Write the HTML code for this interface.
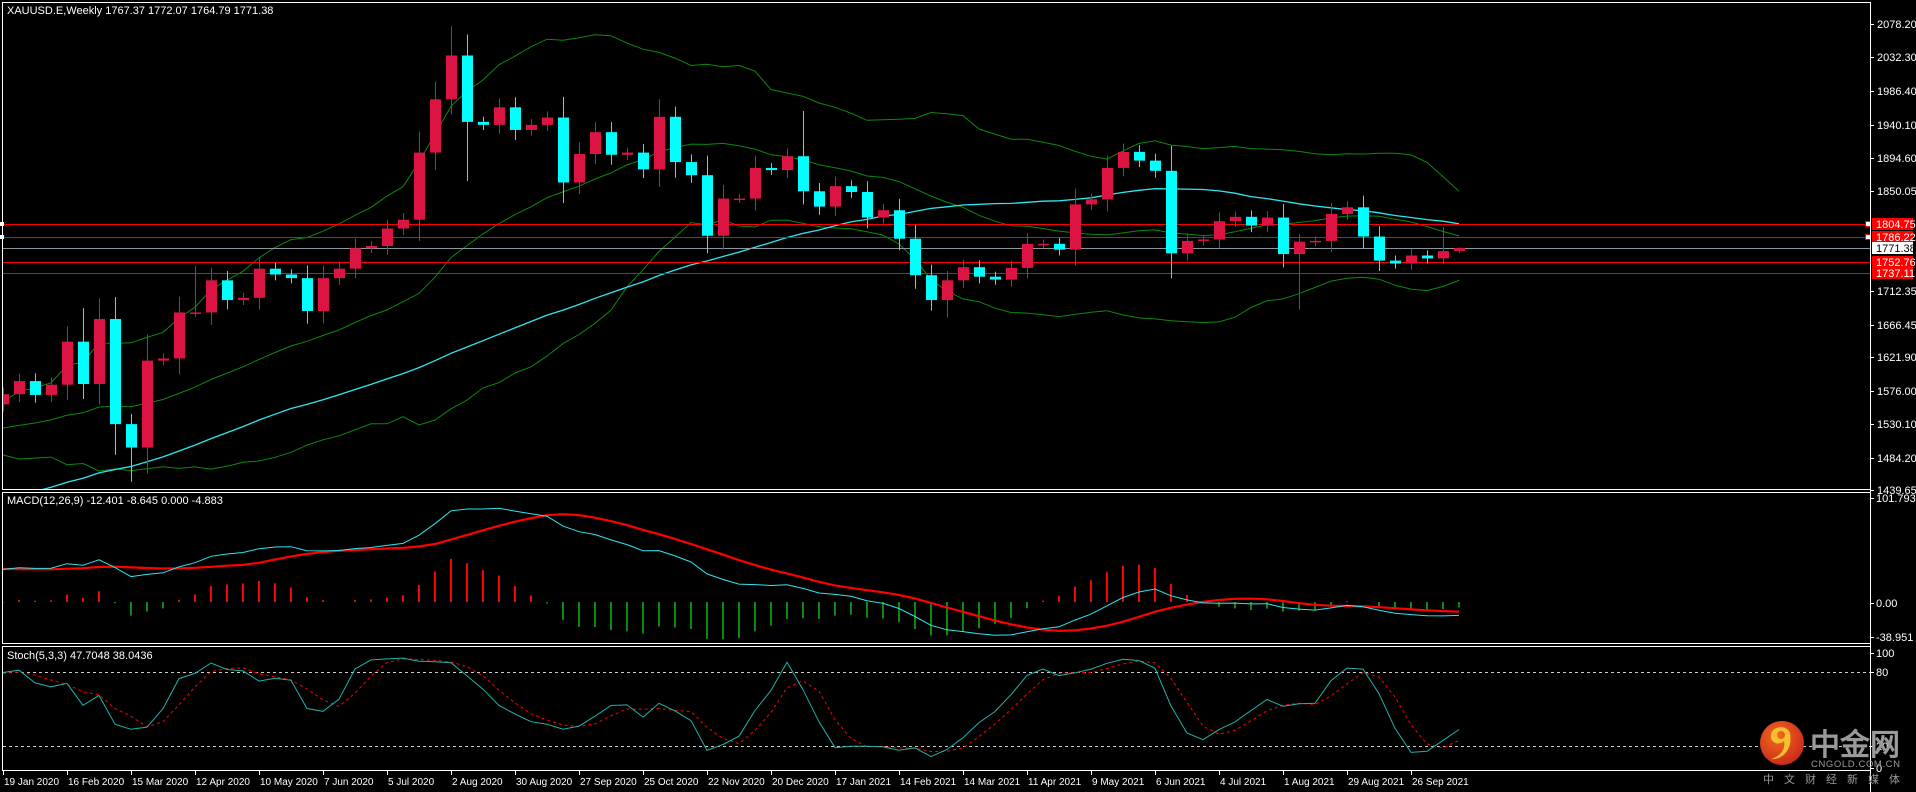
<!DOCTYPE html>
<html><head><meta charset="utf-8">
<style>
html,body{margin:0;padding:0;background:#000;width:1916px;height:792px;overflow:hidden}
svg{display:block}
text{font-family:"Liberation Sans",sans-serif;}
</style></head>
<body>
<div id="c"></div>
<script>
var C=[1571,1589,1570,1584,1643,1585,1674,1530,1498,1617,1620,1683,1683,1727,1700,1703,1743,1735,1730,1685,1730,1743,1771,1774,1798,1810,1902,1975,2035,1944,1940,1964,1933,1940,1950,1861,1900,1930,1899,1902,1879,1951,1889,1871,1788,1839,1839,1881,1878,1897,1849,1828,1856,1848,1813,1823,1784,1734,1700,1727,1745,1732,1728,1744,1777,1777,1769,1831,1838,1881,1903,1891,1877,1764,1781,1783,1808,1814,1802,1813,1763,1780,1781,1818,1827,1787,1754,1750,1761,1757,1767,1771.38];
var PRE=[1283,1298,1318,1313,1314,1322,1327,1313,1294,1302,1303,1312,1298,1295,1291,1285,1276,1280,1286,1284,1298,1285,1341,1341,1399,1409,1400,1418,1426,1419,1445,1497,1498,1527,1515,1510,1515,1505,1500,1512,1520,1515,1508,1512,1518,1522,1515,1510,1520,1525,1530,1540,1545,1552,1557];
var HO={5:1689,7:1704,12:1747,28:2075,42:1965,50:1959,90:1800,91:1772.07};
var LO={8:1451,29:1863,44:1764,59:1676,81:1687,91:1764.79};
var all=PRE.concat(C),P=PRE.length,N=C.length;
var O=[],H=[],L=[];
for(var i=0;i<N;i++){var o=i==0?1557:C[i-1];if(i==91)o=1767.37;O.push(o);var d=Math.abs(C[i]-o);
H.push(HO[i]||Math.max(o,C[i])+6+d*0.25);L.push(LO[i]||Math.min(o,C[i])-6-d*0.25);}
var AH=[],AL=[];for(var j=0;j<all.length;j++){if(j<P){AH.push(all[j]+10);AL.push(all[j]-10);}else{AH.push(H[j-P]);AL.push(L[j-P]);}}
function X(i){return 3+16*i}
function Y(p){return 190.5+(1850.05-p)*0.73}
function sma(a,n,k){var s=0;for(var t=k-n+1;t<=k;t++)s+=a[t];return s/n}
var s='<svg width="1916" height="792" xmlns="http://www.w3.org/2000/svg">';
s+='<defs><clipPath id="m"><rect x="3" y="3" width="1867" height="486"/></clipPath><clipPath id="mc"><rect x="3" y="493" width="1867" height="150"/></clipPath><clipPath id="st"><rect x="3" y="647" width="1867" height="123"/></clipPath><radialGradient id="g" cx="40%" cy="35%" r="70%"><stop offset="0" stop-color="#f26b1d"/><stop offset="1" stop-color="#c8281a"/></radialGradient></defs>';
s+='<g fill="none" stroke="#fff" stroke-width="1"><rect x="2.5" y="2.5" width="1868" height="487"/><rect x="2.5" y="492.5" width="1868" height="151"/><rect x="2.5" y="646.5" width="1868" height="124"/></g>';
var up='',mid='',lo='',ma='';
for(var i=0;i<N;i++){var k=P+i;var m=sma(all,20,k);var v=0;for(var t=k-19;t<=k;t++)v+=(all[t]-m)*(all[t]-m);var sd=Math.sqrt(v/20);
up+=X(i)+','+Y(m+2*sd).toFixed(1)+' ';mid+=X(i)+','+Y(m).toFixed(1)+' ';lo+=X(i)+','+Y(m-2*sd).toFixed(1)+' ';ma+=X(i)+','+Y(sma(all,50,k)).toFixed(1)+' ';}
s+='<g clip-path="url(#m)" fill="none"><polyline points="'+up+'" stroke="#0b8a0b"/><polyline points="'+mid+'" stroke="#0b8a0b"/><polyline points="'+lo+'" stroke="#0b8a0b"/><polyline points="'+ma+'" stroke="#2ee6f0" stroke-width="1.3"/>';
[[1804.75,'#f00'],[1786.22,'#f00'],[1771.38,'#8a96a0'],[1752.76,'#f00'],[1737.11,'#f00']].forEach(function(a){var y=Math.round(Y(a[0]))+0.5;s+='<line x1="0" x2="1870" y1="'+y+'" y2="'+y+'" stroke="'+a[1]+'"/>';});
for(var i=0;i<N;i++){var x=X(i),u=C[i]>=O[i],col=u?'#dc1443':'#00ffff';
s+='<line x1="'+(x+0.5)+'" x2="'+(x+0.5)+'" y1="'+Y(H[i])+'" y2="'+Y(L[i])+'" stroke="'+col+'"/>';
var t=Y(Math.max(C[i],O[i])),b=Y(Math.min(C[i],O[i]));if(b-t<1.5)b=t+1.5;
s+='<rect x="'+(x-5)+'" y="'+t+'" width="11" height="'+(b-t)+'" fill="'+col+'"/>';}
s+='</g>';
[1804.75,1786.22].forEach(function(p){var y=Math.round(Y(p));s+='<rect x="1865.5" y="'+(y-2.5)+'" width="5" height="5" fill="#fff" stroke="#f00"/><rect x="0" y="'+(y-2)+'" width="4" height="4" fill="#fff"/>';});
s+='<line x1="1870.5" x2="1870.5" y1="2" y2="792" stroke="#fff"/>';
[2078.20,2032.30,1986.40,1940.10,1894.60,1850.05,1712.35,1666.45,1621.90,1576.00,1530.10,1484.20,1439.65].forEach(function(p){var y=Math.round(Y(p));s+='<line x1="1870" x2="1874" y1="'+(y+0.5)+'" y2="'+(y+0.5)+'" stroke="#fff"/><text x="1877" y="'+(y+4)+'" font-size="11" fill="#fff">'+p.toFixed(2)+'</text>';});
[[1804.75,'#f00','#fff'],[1786.22,'#f00','#fff'],[1771.38,'#fff','#000'],[1752.76,'#f00','#fff'],[1737.11,'#f00','#fff']].forEach(function(a){var y=Math.round(Y(a[0]));s+='<rect x="1872" y="'+(y-6)+'" width="41" height="12" fill="'+a[1]+'"/><text x="1876" y="'+(y+4)+'" font-size="11" fill="'+a[2]+'">'+a[0].toFixed(2)+'</text>';});
s+='<text x="7" y="14" font-size="11" fill="#fff">XAUUSD.E,Weekly  1767.37 1772.07 1764.79 1771.38</text>';
var e12=all[0],e26=all[0],mac=[];for(var j=0;j<all.length;j++){e12+=(all[j]-e12)*2/13;e26+=(all[j]-e26)*2/27;mac.push(e12-e26);}
function YM(v){return 603-v*1.0}
var ml='',sl='',hb='';for(var i=0;i<N;i++){var k=P+i;var sg=sma(mac,9,k);ml+=X(i)+','+YM(mac[k]).toFixed(1)+' ';sl+=X(i)+','+YM(sg).toFixed(1)+' ';var d=(mac[k]-sg)*1.5;
if(Math.abs(d)>0.5)hb+='<rect x="'+(X(i)-1)+'" y="'+Math.min(602,602-d)+'" width="2" height="'+Math.abs(d)+'" fill="'+(d>0?'#f00':'#0a8a0a')+'"/>';}
s+='<g clip-path="url(#mc)">'+hb+'<polyline fill="none" points="'+sl+'" stroke="#f00" stroke-width="2.2"/><polyline fill="none" points="'+ml+'" stroke="#2ee6f0" stroke-width="1"/></g>';
s+='<text x="7" y="504" font-size="11" fill="#fff">MACD(12,26,9) -12.401 -8.645 0.000 -4.883</text>';
[[101.793,498],[0,603],[-38.951,637]].forEach(function(a){s+='<line x1="1870" x2="1874" y1="'+(a[1]+0.5)+'" y2="'+(a[1]+0.5)+'" stroke="#fff"/><text x="1876" y="'+(a[1]+4)+'" font-size="11" fill="#fff">'+(a[0]==0?'0.00':a[0].toFixed(3))+'</text>';});
function YS(v){return 746-(v-20)*1.233}
var K=[];for(var j=0;j<all.length;j++){if(j<8){K.push(50);continue;}var n=0,dd=0;for(var q=j-2;q<=j;q++){var hh=-1e9,ll=1e9;for(var r=q-4;r<=q;r++){hh=Math.max(hh,AH[r]);ll=Math.min(ll,AL[r]);}n+=all[q]-ll;dd+=hh-ll;}K.push(dd?n/dd*100:50);}
var kl='',dl='';for(var i=0;i<N;i++){var k=P+i;kl+=X(i)+','+YS(K[k]).toFixed(1)+' ';dl+=X(i)+','+YS(sma(K,3,k)).toFixed(1)+' ';}
s+='<g clip-path="url(#st)"><line x1="3" x2="1870" y1="672.5" y2="672.5" stroke="#ccc" stroke-dasharray="3,3"/><line x1="3" x2="1870" y1="746.5" y2="746.5" stroke="#ccc" stroke-dasharray="3,3"/><polyline fill="none" points="'+dl+'" stroke="#f00" stroke-dasharray="3,3"/><polyline fill="none" points="'+kl+'" stroke="#20b2aa"/></g>';
s+='<text x="7" y="659" font-size="11" fill="#fff">Stoch(5,3,3) 47.7048 38.0436</text>';
[['100',653],['80',672],['20',746],['0',768]].forEach(function(a){s+='<line x1="1870" x2="1874" y1="'+(a[1]+0.5)+'" y2="'+(a[1]+0.5)+'" stroke="#fff"/><text x="1876" y="'+(a[1]+4)+'" font-size="11" fill="#fff">'+a[0]+'</text>';});
var D=['19 Jan 2020','16 Feb 2020','15 Mar 2020','12 Apr 2020','10 May 2020','7 Jun 2020','5 Jul 2020','2 Aug 2020','30 Aug 2020','27 Sep 2020','25 Oct 2020','22 Nov 2020','20 Dec 2020','17 Jan 2021','14 Feb 2021','14 Mar 2021','11 Apr 2021','9 May 2021','6 Jun 2021','4 Jul 2021','1 Aug 2021','29 Aug 2021','26 Sep 2021'];
D.forEach(function(t,n){var x=X(n*4);s+='<line x1="'+(x+0.5)+'" x2="'+(x+0.5)+'" y1="771" y2="775" stroke="#fff"/><text x="'+(x+1)+'" y="785" font-size="10" fill="#fff">'+t+'</text>';});
s+='<circle cx="1782" cy="743" r="22" fill="url(#g)"/><path d="M1790 733 C1786 724 1772 726 1771 735 C1770 743 1779 746 1784 741 C1786 750 1779 757 1771 759 C1782 760 1793 750 1790 733 Z M1777 735 a4 4 0 1 0 8 0 a4 4 0 1 0 -8 0Z" fill="#f5c030" fill-rule="evenodd"/>';
s+='<text x="1810" y="755" font-size="30" font-weight="bold" fill="#9a9a9a" font-family="Noto Sans CJK SC,sans-serif">中金网</text>';
s+='<text x="1811" y="767" font-size="9.5" fill="#9a9a9a" letter-spacing="0.6">CNGOLD.COM.CN</text>';
s+='<text x="1763" y="783" font-size="11" fill="#9a9a9a" letter-spacing="10" font-family="Noto Sans CJK SC,sans-serif">中文财经新媒体</text>';
s+='</svg>';
document.getElementById('c').innerHTML=s;
</script>
</body></html>
